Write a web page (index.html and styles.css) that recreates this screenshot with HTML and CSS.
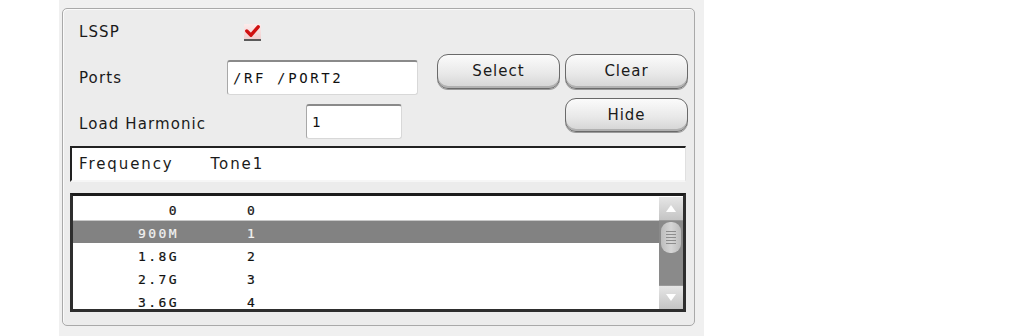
FILE: index.html
```html
<!DOCTYPE html>
<html lang="en">
<head>
  <meta charset="UTF-8" />
  <title>LSSP Setup</title>
  <link rel="stylesheet" href="styles.css">
</head>
<body>
  <div class="frame">
    <div class="panel">
      <div class="top">
        <div class="fields">
          <div class="field-row row-lssp">
            <span class="label">LSSP</span>
            <span class="check">
              <svg width="15" height="13" viewBox="0 0 15 13">
                <path d="M1.8 6 L6 10.2 L13.2 1.8" fill="none" stroke="#d01010" stroke-width="3.4" stroke-linejoin="round" stroke-linecap="round"/>
              </svg>
            </span>
          </div>
          <div class="field-row row-ports">
            <span class="label">Ports</span>
            <div class="input input-ports">/RF /PORT2</div>
          </div>
          <div class="field-row row-harm">
            <span class="label">Load Harmonic</span>
            <div class="input input-harm">1</div>
          </div>
        </div>
        <div class="buttons">
          <button class="btn">Select</button>
          <button class="btn">Clear</button>
          <button class="btn btn-hide">Hide</button>
        </div>
      </div>

      <div class="header-box">
        <span class="h-freq">Frequency</span>
        <span class="h-tone">Tone1</span>
      </div>

      <div class="list">
        <div class="rows">
          <div class="row"><span class="c-freq">0</span><span class="c-tone">0</span></div>
          <div class="row selected"><span class="c-freq">900M</span><span class="c-tone">1</span></div>
          <div class="row"><span class="c-freq">1.8G</span><span class="c-tone">2</span></div>
          <div class="row"><span class="c-freq">2.7G</span><span class="c-tone">3</span></div>
          <div class="row"><span class="c-freq">3.6G</span><span class="c-tone">4</span></div>
        </div>
        <div class="scrollbar">
          <div class="sb-btn">
            <svg width="12" height="9" viewBox="0 0 12 9"><path d="M6 1 L11 8 L1 8 Z" fill="#fff"/></svg>
          </div>
          <div class="sb-track">
            <div class="sb-thumb">
              <span></span><span></span><span></span><span></span><span></span>
            </div>
          </div>
          <div class="sb-btn">
            <svg width="12" height="9" viewBox="0 0 12 9"><path d="M1 1 L11 1 L6 8 Z" fill="#fff"/></svg>
          </div>
        </div>
      </div>
    </div>
  </div>
</body>
</html>
```

FILE: styles.css
```css
body {
  margin: 0;
  background: #fff;
  font-family: "DejaVu Sans", sans-serif;
  color: #1a1a1a;
}

.frame {
  margin-left: 59px;
  width: 645px;
  height: 336px;
  background: #f0f0f0;
  padding: 8px 0 0 3px;
  box-sizing: border-box;
}

.panel {
  width: 633px;
  height: 318px;
  box-sizing: border-box;
  background: #ececec;
  border: 1px solid #a9a9a9;
  border-radius: 5px;
  box-shadow: inset 1px 1px 0 #fafafa;
  padding: 11px 0 0 7px;
}

.top {
  display: flex;
  height: 119px;
}

.fields {
  margin-left: 9px;
  width: 339px;
}

.field-row {
  display: flex;
  align-items: center;
}

.label {
  width: 148px;
  font-size: 15px;
  letter-spacing: 1.1px;
  flex-shrink: 0;
}

.row-lssp {
  height: 22px;
  padding-top: 1px;
}

.row-ports {
  margin-top: 17px;
  height: 35px;
}

.row-harm {
  margin-top: 9px;
  height: 35px;
}

.row-harm .label {
  padding-top: 5px;
}

.check {
  margin-left: 17px;
  width: 17px;
  height: 15px;
  background: linear-gradient(#fcecec, #f0cfcf);
  border-bottom: 2px solid #5a5a5a;
  display: flex;
  align-items: center;
  justify-content: center;
}

.input {
  height: 35px;
  box-sizing: border-box;
  background: #fff;
  border: 1px solid #d8d8d8;
  border-top: 2px solid #8a8a8a;
  border-left: 1px solid #a8a8a8;
  border-radius: 3px;
  font-family: "DejaVu Sans Mono", monospace;
  font-size: 14px;
  letter-spacing: 2.6px;
  color: #111;
  display: flex;
  align-items: center;
  padding-left: 5px;
}

.input-ports {
  width: 191px;
}

.input-harm {
  width: 96px;
  margin-left: 79px;
}

.buttons {
  margin-left: 19px;
  margin-top: 34px;
  display: grid;
  grid-template-columns: 123px 123px;
  grid-template-rows: 35px 34px;
  column-gap: 5px;
  row-gap: 9px;
  align-self: flex-start;
}

.btn {
  font-family: "DejaVu Sans", sans-serif;
  font-size: 15px;
  letter-spacing: 1px;
  color: #1a1a1a;
  border: 1px solid #6a6a6a;
  border-radius: 11px;
  background: linear-gradient(#fbfbfb, #e9e9e9 55%, #d4d4d4);
  box-shadow: inset 0 -2px 0 #b0b0b0, 0 1px 0 #9a9a9a;
  padding: 0 0 1px 0;
}

.btn-hide {
  grid-column: 2;
  grid-row: 2;
}

.header-box {
  margin-top: 7px;
  width: 616px;
  height: 36px;
  box-sizing: border-box;
  background: #fff;
  border-top: 2px solid #222;
  border-left: 2px solid #222;
  border-bottom: 2px solid #f6f6f6;
  border-right: 1px solid #e0e0e0;
  display: flex;
  align-items: center;
  font-size: 15px;
  letter-spacing: 1.9px;
  padding-left: 7px;
}

.h-tone {
  margin-left: 37px;
}

.list {
  margin-top: 11px;
  width: 616px;
  height: 119px;
  box-sizing: border-box;
  border: 3px solid #2e2e2e;
  border-top-color: #1c1c1c;
  background: #fff;
  display: flex;
  padding: 1px 0 0 0;
  overflow: hidden;
}

.rows {
  flex: 1;
  font-family: "DejaVu Sans Mono", monospace;
  font-size: 13px;
  letter-spacing: 2.4px;
  color: #111;
  -webkit-text-stroke: 0.2px #111;
}

.row {
  height: 23px;
  box-sizing: border-box;
  padding-top: 3px;
  display: flex;
  align-items: center;
}

.row.selected {
  background: #828282;
  color: #f2f2f2;
  -webkit-text-stroke: 0.2px #f2f2f2;
  box-shadow: inset 0 1px 0 #c8c8c8;
}

.c-freq {
  width: 106px;
  text-align: right;
}

.c-tone {
  margin-left: 68px;
}

.scrollbar {
  width: 24px;
  display: flex;
  flex-direction: column;
  background: #8a8a8a;
}

.sb-btn {
  height: 23px;
  background: linear-gradient(#e6e6e6, #c4c4c4);
  border-bottom: 1px solid #9a9a9a;
  display: flex;
  align-items: center;
  justify-content: center;
}

.sb-btn:last-child {
  border-top: 1px solid #9a9a9a;
  border-bottom: none;
}

.sb-track {
  flex: 1;
  background: #8a8a8a;
  padding-top: 1px;
}

.sb-thumb {
  margin: 0 auto;
  width: 20px;
  height: 31px;
  border-radius: 9px;
  background: linear-gradient(90deg, #bdbdbd, #d6d6d6 50%, #bcbcbc);
  display: flex;
  flex-direction: column;
  align-items: center;
  justify-content: center;
  gap: 2px;
}

.sb-thumb span {
  width: 10px;
  height: 1px;
  background: #8d8d8d;
}
```
